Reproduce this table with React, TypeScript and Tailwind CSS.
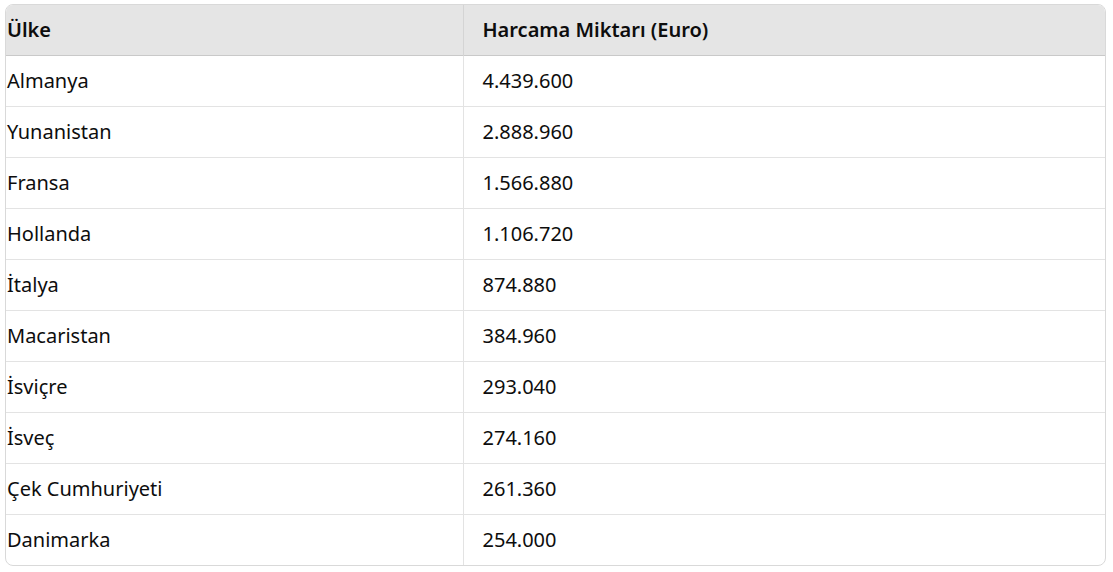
import React from "react";

const rows: [string, string][] = [
  ["Almanya", "4.439.600"],
  ["Yunanistan", "2.888.960"],
  ["Fransa", "1.566.880"],
  ["Hollanda", "1.106.720"],
  ["İtalya", "874.880"],
  ["Macaristan", "384.960"],
  ["İsviçre", "293.040"],
  ["İsveç", "274.160"],
  ["Çek Cumhuriyeti", "261.360"],
  ["Danimarka", "254.000"],
];

export default function App() {
  return (
    <div className="bg-white pt-[4px] pl-[5px] pr-[7px]" style={{ fontFamily: '"Noto Sans", "Open Sans", sans-serif' }}>
      <div className="rounded-lg border border-[#d9d9d9] overflow-hidden">
        <table className="w-full border-collapse text-[20px] text-[#0d0d0d]">
          <thead>
            <tr className="bg-[#e5e5e5] border-b border-[#c9c9c9]">
              <th className="w-[457px] h-[50px] text-left font-semibold pl-[1px] border-r border-[#d4d4d4]">Ülke</th>
              <th className="h-[50px] text-left font-semibold pl-[19px]">Harcama Miktarı (Euro)</th>
            </tr>
          </thead>
          <tbody>
            {rows.map(([country, amount], i) => (
              <tr key={country} className={i < rows.length - 1 ? "border-b border-[#e3e3e3]" : ""}>
                <td className="h-[51px] pl-[1px] border-r border-[#e3e3e3]">{country}</td>
                <td className="h-[51px] pl-[19px]">{amount}</td>
              </tr>
            ))}
          </tbody>
        </table>
      </div>
    </div>
  );
}
